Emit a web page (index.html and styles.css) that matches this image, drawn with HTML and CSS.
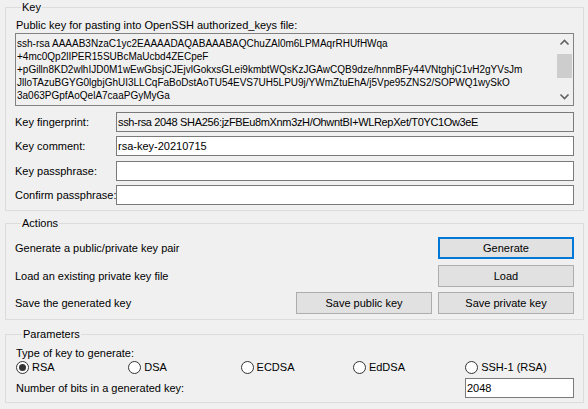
FILE: index.html
```html
<!DOCTYPE html>
<html lang="en">
<head>
  <meta charset="UTF-8">
  <title>PuTTY Key Generator</title>
  <link rel="stylesheet" href="styles.css">
</head>
<body>
  <div class="window">

    <!-- Key group -->
    <fieldset class="group key-group">
      <legend>Key</legend>
      <div class="pub-label">Public key for pasting into OpenSSH authorized_keys file:</div>
      <div class="pubkey">
        <div class="pubkey-text">ssh-rsa AAAAB3NzaC1yc2EAAAADAQABAAABAQChuZAl0m6LPMAqrRHUfHWqa
+4mc0Qp2lIPER15SUBcMaUcbd4ZECpeF
+pGilln8KD2wlhIJD0M1wEwGbsjCJEjvlGokxsGLei9kmbtWQsKzJGAwCQB9dze/hnmBFy44VNtghjC1vH2gYVsJm
JlloTAzuBGYG0lgbjGhUI3LLCqFaBoDstAoTU54EVS7UH5LPU9j/YWmZtuEhA/j5Vpe95ZNS2/SOPWQ1wySkO
3a063PGpfAoQelA7caaPGyMyGa</div>
        <div class="scrollbar">
          <svg class="arrow" width="17" height="17" viewBox="0 0 17 17"><polyline points="4.5,10.5 8.5,6.5 12.5,10.5" fill="none" stroke="#606060" stroke-width="1.6"/></svg>
          <div class="track"><div class="thumb"></div></div>
          <svg class="arrow" width="17" height="17" viewBox="0 0 17 17"><polyline points="4.5,6.5 8.5,10.5 12.5,6.5" fill="none" stroke="#606060" stroke-width="1.6"/></svg>
        </div>
      </div>

      <div class="fields">
        <label>Key fingerprint:</label>
        <div class="box readonly fingerprint">ssh-rsa 2048 SHA256:jzFBEu8mXnm3zH/OhwntBI+WLRepXet/T0YC1Ow3eE</div>
        <label>Key comment:</label>
        <div class="box">rsa-key-20210715</div>
        <label>Key passphrase:</label>
        <div class="box"></div>
        <label>Confirm passphrase:</label>
        <div class="box"></div>
      </div>
    </fieldset>

    <!-- Actions group -->
    <fieldset class="group actions-group">
      <legend>Actions</legend>
      <div class="action-row">
        <span class="action-label">Generate a public/private key pair</span>
        <button class="btn default">Generate</button>
      </div>
      <div class="action-row">
        <span class="action-label">Load an existing private key file</span>
        <button class="btn">Load</button>
      </div>
      <div class="action-row">
        <span class="action-label">Save the generated key</span>
        <button class="btn">Save public key</button>
        <button class="btn">Save private key</button>
      </div>
    </fieldset>

    <!-- Parameters group -->
    <fieldset class="group params-group">
      <legend>Parameters</legend>
      <div class="type-label">Type of key to generate:</div>
      <div class="radios">
        <span class="radio checked"><i></i>RSA</span>
        <span class="radio"><i></i>DSA</span>
        <span class="radio"><i></i>ECDSA</span>
        <span class="radio"><i></i>EdDSA</span>
        <span class="radio"><i></i>SSH-1 (RSA)</span>
      </div>
      <div class="bits-row">
        <span class="bits-label">Number of bits in a generated key:</span>
        <div class="box bits">2048</div>
      </div>
    </fieldset>

  </div>
</body>
</html>
```

FILE: styles.css
```css
body {
  margin: 0;
  background-color: #f0f0f0;
  font-family: "Liberation Sans", Arial, sans-serif;
  font-size: 11px;
  color: #000;
}
.window {
  width: 588px;
  height: 409px;
  padding: 0 4px 0 5px;
  box-sizing: border-box;
}
.group {
  margin: 0;
  padding: 0 9px 5px 9px;
  border: 1px solid #dcdcdc;
  min-width: 0;
}
.group legend {
  padding: 0 1px;
  margin-left: 6px;
  line-height: 15px;
}
.pub-label {
  padding: 3px 0 0 1px;
  line-height: 15px;
}
.pubkey {
  display: flex;
  height: 73px;
  border: 1px solid #828282;
  box-sizing: border-box;
  background-color: #f0f0f0;
}
.pubkey-text {
  flex: 1;
  padding: 3px 0 0 1px;
  font-size: 10px;
  line-height: 13px;
  white-space: pre;
  overflow: hidden;
}
.scrollbar {
  width: 17px;
  display: flex;
  flex-direction: column;
}
.arrow {
  display: block;
  flex: none;
}
.track {
  flex: 1;
  padding-top: 3px;
}
.thumb {
  height: 24px;
  margin: 0 1px;
  background-color: #cdcdcd;
}
.fields {
  display: grid;
  grid-template-columns: 101px 458px;
  grid-template-rows: 20px 21px 20px 20px;
  row-gap: 4px;
  margin-top: 6px;
  align-items: start;
}
.fields label {
  line-height: 20px;
  white-space: nowrap;
}
.box {
  height: 20px;
  box-sizing: border-box;
  border: 1px solid #7a7a7a;
  background-color: #fff;
  padding-left: 1px;
  line-height: 18px;
  white-space: nowrap;
  overflow: hidden;
}
.box.readonly {
  background-color: #f0f0f0;
}
.fingerprint {
  letter-spacing: -0.35px;
}
.actions-group {
  margin-top: 5px;
  padding-top: 6px;
  padding-bottom: 5px;
}
.action-row {
  display: flex;
  align-items: center;
  height: 22px;
  gap: 6px;
}
.action-row + .action-row {
  margin-top: 6px;
}
.action-row:last-child {
  margin-top: 5px;
}
.action-label {
  flex: 1;
}
.btn {
  width: 136px;
  height: 22px;
  margin: 0;
  padding: 0;
  font-family: inherit;
  font-size: 11px;
  color: #000;
  background-color: #e1e1e1;
  border: 1px solid #adadad;
}
.btn.default {
  border: 2px solid #0078d7;
}
.params-group {
  margin-top: 7px;
  padding-top: 4px;
  padding-bottom: 4px;
  padding-left: 10px;
}
.type-label {
  line-height: 14px;
}
.radios {
  display: grid;
  grid-template-columns: repeat(5, 112.3px);
  height: 14px;
  margin-bottom: 4px;
}
.radio {
  display: flex;
  align-items: center;
  gap: 3px;
  line-height: 14px;
}
.radio i {
  width: 13px;
  height: 13px;
  box-sizing: border-box;
  border: 1px solid #333;
  border-radius: 50%;
  background-color: #fff;
  position: relative;
}
.radio.checked i::after {
  content: "";
  position: absolute;
  left: 2px;
  top: 2px;
  width: 7px;
  height: 7px;
  border-radius: 50%;
  background-color: #333;
}
.bits-row {
  display: flex;
  align-items: center;
}
.bits-label {
  width: 449px;
}
.box.bits {
  width: 109px;
  line-height: 18px;
}
```
